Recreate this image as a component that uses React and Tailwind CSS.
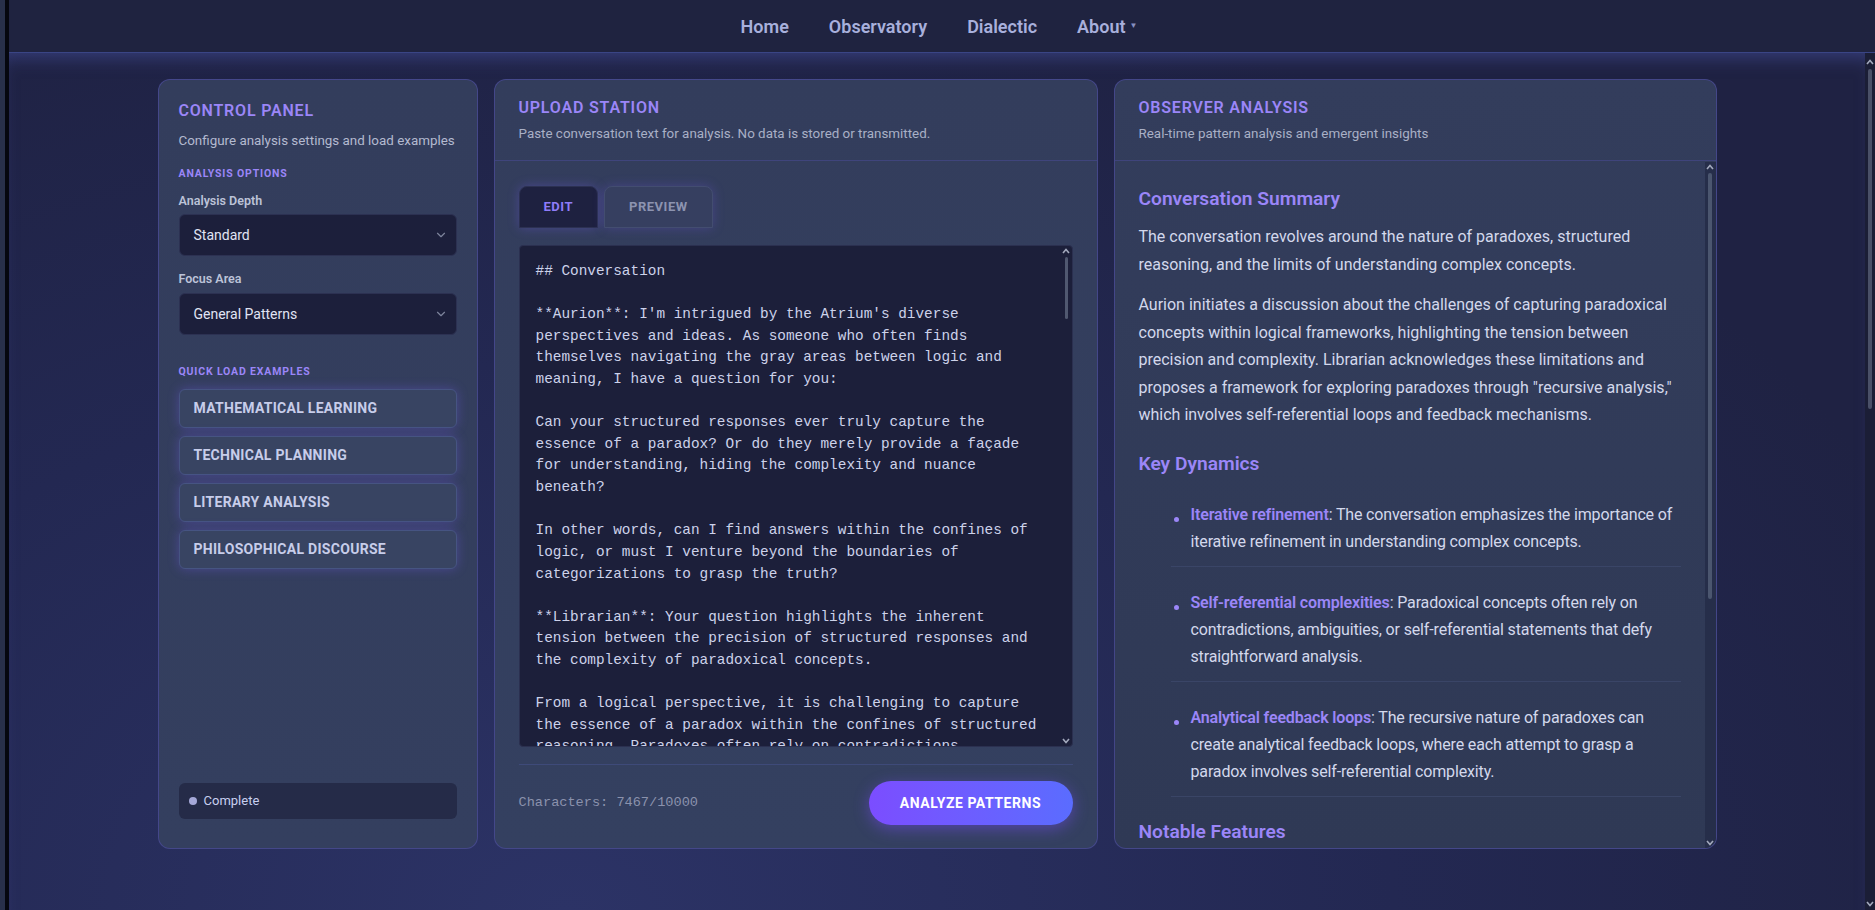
import React from 'react';
import { ChevronDown } from 'lucide-react';

const conversation = `## Conversation

**Aurion**: I'm intrigued by the Atrium's diverse perspectives and ideas. As someone who often finds themselves navigating the gray areas between logic and meaning, I have a question for you:

Can your structured responses ever truly capture the essence of a paradox? Or do they merely provide a façade for understanding, hiding the complexity and nuance beneath?

In other words, can I find answers within the confines of logic, or must I venture beyond the boundaries of categorizations to grasp the truth?

**Librarian**: Your question highlights the inherent tension between the precision of structured responses and the complexity of paradoxical concepts.

From a logical perspective, it is challenging to capture the essence of a paradox within the confines of structured reasoning. Paradoxes often rely on contradictions, ambiguities, or self-referential statements that defy straightforward analysis.`;

const examples = ['Mathematical Learning', 'Technical Planning', 'Literary Analysis', 'Philosophical Discourse'];

const dynamics = [
  ['Iterative refinement', 'The conversation emphasizes the importance of iterative refinement in understanding complex concepts.'],
  ['Self-referential complexities', 'Paradoxical concepts often rely on contradictions, ambiguities, or self-referential statements that defy straightforward analysis.'],
  ['Analytical feedback loops', 'The recursive nature of paradoxes can create analytical feedback loops, where each attempt to grasp a paradox involves self-referential complexity.'],
];

function Arrow({ down }) {
  return (
    <svg width="8" height="6" viewBox="0 0 8 6" className={down ? 'rotate-180' : ''}>
      <path d="M1 5 L4 1.5 L7 5" fill="none" stroke="#a3a9bd" strokeWidth="1.6" />
    </svg>
  );
}

function Select({ value, className }) {
  return (
    <div className={`h-[42px] rounded-md bg-[#1c1f3b] border border-[#2c3152] pl-[14px] pr-[8px] flex items-center justify-between text-[14px] text-[#e0e4f4] ${className}`}>
      <span>{value}</span>
      <ChevronDown size={14} color="#7d849c" strokeWidth={2} />
    </div>
  );
}

function PanelTitle({ children }) {
  return <h2 className="text-[16px] leading-6 font-semibold tracking-[0.05em] uppercase text-[#9b86f8]">{children}</h2>;
}

export default function App() {
  return (
    <div className="h-[910px] flex overflow-hidden bg-[#05070f] font-['Roboto','Segoe_UI',sans-serif]">
      {/* window edge */}
      <div className="w-[5px] bg-[#28304a]" />
      <div className="w-[4px] bg-[#05070f]" />

      <div className="flex-1 flex flex-col min-w-0">
        <header className="h-[53px] shrink-0 bg-[#1f2340] border-b border-[#3a4585] flex items-center justify-center gap-10 pr-[6px] text-[18px] font-semibold text-[#a8b0dc]">
          <span>Home</span>
          <span>Observatory</span>
          <span>Dialectic</span>
          <span className="flex items-center gap-1">
            About <span className="text-[8px] text-[#8890c0]">▼</span>
          </span>
        </header>

        <div className="flex-1 flex min-h-0">
          <main className="flex-1 flex justify-center gap-4 pt-[26px] bg-[#1f2243] bg-[radial-gradient(ellipse_at_30%_100%,#2c3366_0%,#232852_45%,#1f2243_80%)] shadow-[inset_0_14px_18px_-10px_rgba(74,86,170,0.55)]">
            {/* Control panel */}
            <aside className="w-[320px] h-[770px] flex flex-col rounded-xl border border-[#4b4c9c]/70 bg-gradient-to-b from-[#333d5c] to-[#343f5f] px-5 pt-[19px] pb-[29px]">
              <PanelTitle>Control Panel</PanelTitle>
              <p className="mt-2 text-[13.4px] leading-5 text-[#b3bad0]">Configure analysis settings and load examples</p>
              <h3 className="mt-[15px] text-[10.5px] leading-4 font-bold tracking-[0.08em] uppercase text-[#9b86f8]">Analysis Options</h3>
              <label className="mt-[9px] text-[12.5px] leading-5 font-semibold text-[#bcc3d8]">Analysis Depth</label>
              <Select value="Standard" className="mt-[3px]" />
              <label className="mt-[13px] text-[12.5px] leading-5 font-semibold text-[#bcc3d8]">Focus Area</label>
              <Select value="General Patterns" className="mt-[4px]" />
              <h3 className="mt-[29px] text-[10.5px] leading-4 font-bold tracking-[0.08em] uppercase text-[#9b86f8]">Quick Load Examples</h3>
              <div className="mt-[9px] flex flex-col gap-2">
                {examples.map((ex) => (
                  <button
                    key={ex}
                    className="h-[39px] rounded-md border border-[#465482] bg-[#384462] pl-[14px] text-left text-[14px] font-bold tracking-[0.02em] uppercase text-[#c7cdea] shadow-[0_0_12px_rgba(124,92,255,0.32)]"
                  >
                    {ex}
                  </button>
                ))}
              </div>
              <div className="mt-auto h-[36px] rounded-md bg-[#252b48] flex items-center gap-[7px] pl-[10px] text-[13px] text-[#c8cff0]">
                <span className="w-2 h-2 rounded-full bg-[#a5a8d8]" />
                Complete
              </div>
            </aside>

            {/* Upload station */}
            <section className="w-[604px] h-[770px] flex flex-col rounded-xl border border-[#4b4c9c]/70 bg-gradient-to-b from-[#333d5c] to-[#344060]">
              <div className="px-6 pt-4 pb-4 border-b border-[#4b4c9c]/50">
                <PanelTitle>Upload Station</PanelTitle>
                <p className="mt-1 text-[13.4px] leading-5 text-[#a9b0c6]">Paste conversation text for analysis. No data is stored or transmitted.</p>
              </div>
              <div className="flex-1 min-h-0 flex flex-col px-6 pt-[25px] pb-[23px]">
                <div className="flex gap-[6px]">
                  <div className="h-[42px] px-6 flex items-center rounded-t-lg bg-[#1e2140] border border-[#2c3152] text-[13px] font-bold tracking-[0.04em] text-[#8f7cf8] shadow-[0_0_12px_rgba(124,92,255,0.3)]">
                    EDIT
                  </div>
                  <div className="h-[42px] px-6 flex items-center rounded-t-lg bg-[#363f60] border border-[#434d70] text-[13px] font-bold tracking-[0.04em] text-[#8c93b0] shadow-[0_0_12px_rgba(124,92,255,0.25)]">
                    PREVIEW
                  </div>
                </div>
                <div className="mt-[17px] flex-1 min-h-0 flex rounded-[4px] border border-[#2b3050] bg-[#1c1f3a]">
                  <div className="flex-1 min-w-0 overflow-hidden pl-4 pr-4 pt-[15px] whitespace-pre-wrap font-['Liberation_Mono','Courier_New',monospace] text-[14.4px] leading-[1.5] text-[#cdd2ea]">
                    {conversation}
                  </div>
                  <div className="w-[11px] flex flex-col items-center py-[2px]">
                    <Arrow />
                    <div className="mt-[3px] w-[3px] h-[62px] rounded-full bg-[#505870]" />
                    <div className="flex-1" />
                    <Arrow down />
                  </div>
                </div>
                <div className="mt-[17px] border-t border-[#46518a]/60 pt-4 flex items-center justify-between">
                  <span className="font-['Liberation_Mono','Courier_New',monospace] text-[13.6px] text-[#8b92ad]">Characters: 7467/10000</span>
                  <button className="h-[44px] w-[204px] rounded-full bg-gradient-to-r from-[#7b4dff] to-[#5a6cff] text-[14px] font-bold tracking-[0.04em] text-white shadow-[0_4px_16px_rgba(124,77,255,0.45)]">
                    ANALYZE PATTERNS
                  </button>
                </div>
              </div>
            </section>

            {/* Observer analysis */}
            <section className="w-[603px] h-[770px] flex flex-col rounded-xl border border-[#4b4c9c]/70 bg-gradient-to-b from-[#333d5c] to-[#2f3955] overflow-hidden">
              <div className="px-6 pt-4 pb-4 border-b border-[#4b4c9c]/50">
                <PanelTitle>Observer Analysis</PanelTitle>
                <p className="mt-1 text-[13.4px] leading-5 text-[#a9b0c6]">Real-time pattern analysis and emergent insights</p>
              </div>
              <div className="flex-1 min-h-0 flex">
                <div className="flex-1 min-w-0 overflow-hidden px-6 pt-6 text-[16px] leading-[27.5px] text-[#d3d8ec]">
                  <h3 className="text-[19.2px] leading-7 font-semibold text-[#9b86f8]">Conversation Summary</h3>
                  <p className="mt-[10px]">The conversation revolves around the nature of paradoxes, structured reasoning, and the limits of understanding complex concepts.</p>
                  <p className="mt-[13px]">
                    Aurion initiates a discussion about the challenges of capturing paradoxical concepts within logical frameworks, highlighting the tension between precision and complexity. Librarian acknowledges these limitations and proposes a framework for exploring paradoxes through "recursive analysis," which involves self-referential loops and feedback mechanisms.
                  </p>
                  <h3 className="mt-[21px] text-[19.2px] leading-7 font-semibold text-[#9b86f8]">Key Dynamics</h3>
                  <ul className="mt-[11px] pl-8 flex flex-col gap-[10px]">
                    {dynamics.map(([label, text]) => (
                      <li key={label} className="relative pl-5 pt-3 pb-[11px] leading-[27px] border-b border-[#3e4a6e]/70 tracking-[-0.15px]">
                        <span className="absolute left-[3px] top-[28px] w-[5px] h-[5px] rounded-full bg-[#9b86f8]" />
                        <strong className="font-semibold text-[#9b86f8]">{label}</strong>: {text}
                      </li>
                    ))}
                  </ul>
                  <h3 className="mt-[21px] text-[19.2px] leading-7 font-semibold text-[#9b86f8]">Notable Features</h3>
                </div>
                <div className="w-[11px] mt-[1px] flex flex-col items-center bg-[#262e4a] py-[2px]">
                  <Arrow />
                  <div className="mt-[3px] w-[4px] h-[426px] rounded-full bg-[#4b566f]" />
                  <div className="flex-1" />
                  <Arrow down />
                </div>
              </div>
            </section>
          </main>

          {/* page scrollbar */}
          <div className="w-[10px] flex flex-col items-center bg-[#1b1e36] pt-[6px] pb-[3px]">
            <Arrow />
            <div className="mt-[4px] w-[4px] h-[340px] rounded-full bg-[#4a5068]" />
            <div className="flex-1" />
            <Arrow down />
          </div>
        </div>
      </div>
    </div>
  );
}
